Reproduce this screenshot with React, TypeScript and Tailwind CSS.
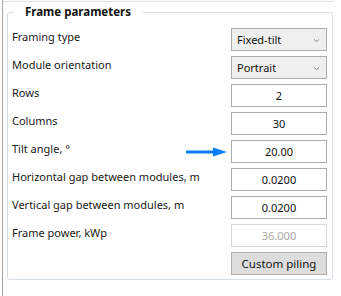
import React from "react";

const rows: { label: string; value: string; kind: "select" | "input" | "disabled" }[] = [
  { label: "Framing type", value: "Fixed-tilt", kind: "select" },
  { label: "Module orientation", value: "Portrait", kind: "select" },
  { label: "Rows", value: "2", kind: "input" },
  { label: "Columns", value: "30", kind: "input" },
  { label: "Tilt angle, °", value: "20.00", kind: "input" },
  { label: "Horizontal gap between modules, m", value: "0.0200", kind: "input" },
  { label: "Vertical gap between modules, m", value: "0.0200", kind: "input" },
  { label: "Frame power, kWp", value: "36.000", kind: "disabled" },
];

function Chevron() {
  return (
    <svg width="7" height="5" viewBox="0 0 7 5" className="absolute right-[6px] top-[9px]">
      <path d="M1 1.5 L3.5 3.5 L6 1.5" fill="none" stroke="#8a8a8a" strokeWidth="1" />
    </svg>
  );
}

function Field({ value, kind }: { value: string; kind: string }) {
  if (kind === "select") {
    return (
      <div className="relative w-[96px] h-[23px] border border-[#acacac] bg-[#efefef] pl-[5px] leading-[21px] text-[#111]">
        {value}
        <Chevron />
      </div>
    );
  }
  if (kind === "disabled") {
    return (
      <div className="w-[96px] h-[23px] border border-[#d6d6d6] bg-white text-center leading-[21px] text-[#a8a8a8]">
        {value}
      </div>
    );
  }
  return (
    <div className="w-[96px] h-[23px] border border-[#acacac] bg-white text-center leading-[21px] text-[#111]">
      {value}
    </div>
  );
}

export default function App() {
  return (
    <div
      className="w-[341px] h-[296px] bg-white overflow-hidden text-[11px] text-[#1a1a1a]"
      style={{ fontFamily: '"Noto Sans", "Open Sans", sans-serif' }}
    >
      <div className="ml-[2px] h-full border-l border-[#a3a3a3]">
        {/* previous panel edge */}
        <div className="w-[331px] h-[2px] border-b border-r border-[#e1e1e1] rounded-br-[2px]" />

        <fieldset className="ml-[4px] mt-[2px] w-[326px] border border-[#d5dfe5] rounded-[3px] pl-[4px] pr-[5px] pb-[4px]">
          <legend className="ml-[1px] px-[12px] font-bold leading-[16px] text-[11.5px] text-[#111]">
            Frame parameters
          </legend>

          <div className="flex flex-col gap-[5px] mt-[8px]">
            {rows.map((r) => (
              <div key={r.label} className="flex items-start justify-between h-[23px] relative">
                <span className="pt-[1px] leading-[16px]">{r.label}</span>
                {r.label.startsWith("Tilt") && (
                  <svg width="42" height="10" viewBox="0 0 42 10" className="absolute left-[174px] top-[7px]">
                    <rect x="0" y="3.5" width="28" height="3" fill="#0a7cf5" />
                    <path d="M27 0.5 L41 5 L27 9.5 Z" fill="#0a7cf5" />
                  </svg>
                )}
                <Field value={r.value} kind={r.kind} />
              </div>
            ))}
            <div className="flex justify-end h-[23px]">
              <div className="w-[96px] h-[23px] border border-[#adadad] bg-[#dddddd] text-center leading-[21px] text-[#111] text-[11.5px]">
                Custom piling
              </div>
            </div>
          </div>
        </fieldset>
      </div>
    </div>
  );
}
